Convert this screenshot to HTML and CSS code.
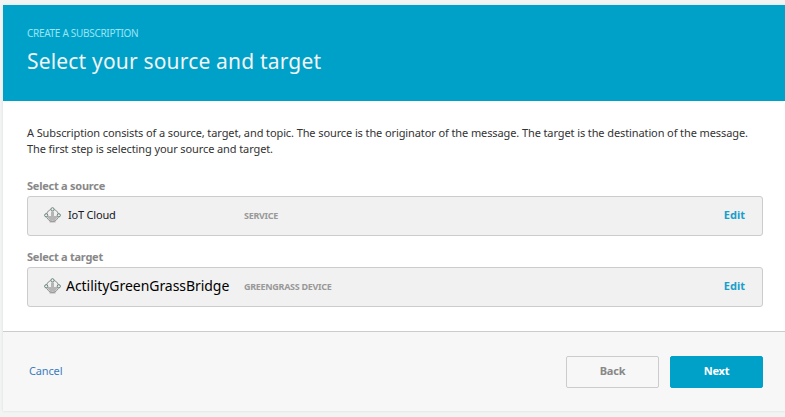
FILE: index.html
```html
<!DOCTYPE html>
<html lang="en">
<head>
<meta charset="utf-8">
<title>Create a subscription</title>
<link rel="stylesheet" href="styles.css">
</head>
<body>
<svg class="defs" width="0" height="0" aria-hidden="true">
  <symbol id="core" viewBox="0 0 18 18">
    <path class="core-fill" d="M8 5.500h3V10h3v2l-2 2H7l-2-2v-2h3zM6.500 14.500h6v2h-6z"/>
    <circle class="core-ring" cx="9.500" cy="9.300" r="6"/>
    <circle class="core-node" cx="9.500" cy="3.300" r="1.600"/>
    <circle class="core-node" cx="3.200" cy="9.300" r="1.600"/>
    <circle class="core-node" cx="15.800" cy="9.300" r="1.600"/>
  </symbol>
</svg>
<main class="wizard">
  <header class="banner">
    <p class="eyebrow">CREATE A SUBSCRIPTION</p>
    <h1 class="title">Select your source and target</h1>
  </header>
  <section class="content">
    <p class="intro">A Subscription consists of a source, target, and topic. The source is the originator of the message. The target is the destination of the message.<br>The first step is selecting your source and target.</p>
    <h2 class="label">Select a source</h2>
    <div class="row">
      <svg class="icon"><use href="#core"/></svg>
      <span class="name">IoT Cloud</span>
      <span class="kind">SERVICE</span>
      <a class="edit">Edit</a>
    </div>
    <h2 class="label">Select a target</h2>
    <div class="row">
      <svg class="icon"><use href="#core"/></svg>
      <span class="name name-large">ActilityGreenGrassBridge</span>
      <span class="kind">GREENGRASS DEVICE</span>
      <a class="edit">Edit</a>
    </div>
  </section>
  <footer class="actions">
    <a class="cancel">Cancel</a>
    <button class="button">Back</button>
    <button class="button primary">Next</button>
  </footer>
</main>
</body>
</html>
```
FILE: styles.css
```css
* { box-sizing: border-box; }
body {
  margin: 0;
  padding: 5px 0 0 3px;
  height: 417px;
  overflow: hidden;
  background: #f2f3f3;
  font: 11px/16px "Noto Sans", "Open Sans", sans-serif;
  color: #333;
}
p, h1, h2 { margin: 0; }
.defs { position: absolute; }
.wizard {
  height: 406px;
  background: #fff;
  box-shadow: 0 0 2px #d5dbdb;
}
.banner {
  height: 96px;
  padding: 20px 24px 0;
  background: #00a1c9;
}
.eyebrow { font-size: 10px; line-height: 17px; color: #99e5f5; letter-spacing: -0.3px; }
.title { margin-top: 4px; font-size: 21px; line-height: 31px; font-weight: 400; color: #f2f3f3; letter-spacing: 0.18px; }
.content { height: 230px; padding: 24px 22px 0 24px; }
.intro { height: 52px; white-space: nowrap; letter-spacing: -0.103px; }
.label { height: 19px; font-size: 11px; line-height: 18px; font-weight: 700; color: #888; letter-spacing: -0.25px; }
.row {
  display: grid;
  grid-template-columns: 25px 176px 1fr auto;
  align-items: center;
  height: 40px;
  margin-bottom: 12px;
  padding: 0 17px 2px 15px;
  border: 1px solid #ccc;
  border-radius: 3px;
  background: #f1f1f1;
}
.icon { width: 18px; height: 18px; }
.core-fill { fill: #b5b5b5; }
.core-ring { fill: none; stroke: #8e8e8e; stroke-width: 1; }
.core-node { fill: #e8f3ee; stroke: #668078; stroke-width: 1; }
.name { color: #16191f; letter-spacing: -0.2px; }
.name-large { margin-left: -2px; font-size: 14px; color: #000; letter-spacing: -0.05px; }
.kind { padding-top: 2px; font-size: 9px; font-weight: 700; color: #999; letter-spacing: -0.3px; }
.edit { font-weight: 700; color: #1a9fcb; }
.actions {
  display: flex;
  align-items: center;
  height: 80px;
  padding: 0 22px 2px 26px;
  border-top: 1px solid #ccc;
  background: #f7f7f7;
}
.cancel { margin-right: auto; color: #3b7dbd; letter-spacing: -0.15px; }
.button {
  position: relative;
  top: 1px;
  width: 93px;
  height: 32px;
  margin-left: 11px;
  padding: 0 0 2px;
  border: 1px solid #ccc;
  border-radius: 2px;
  background: #f7f7f7;
  font: 700 11px/16px "Noto Sans", "Open Sans", sans-serif;
  color: #888;
  letter-spacing: -0.2px;
}
.primary { border-color: #00a1c9; background: #00a1c9; color: #fff; }
```
